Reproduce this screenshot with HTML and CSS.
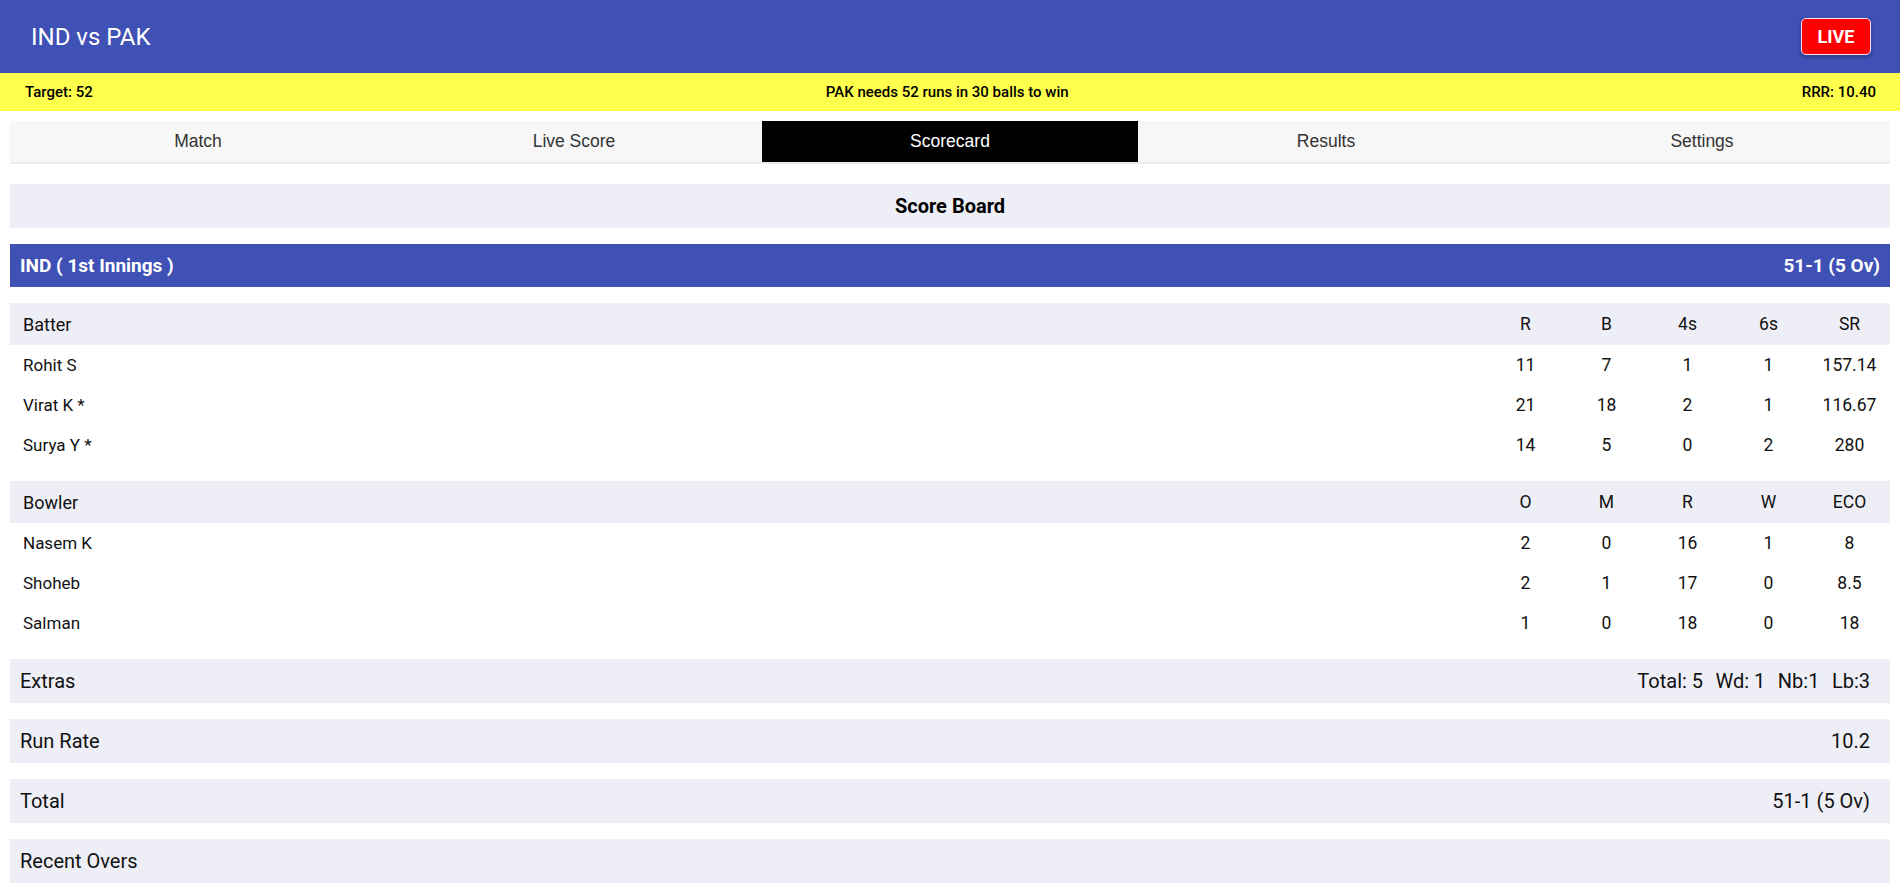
FILE: index.html
```html
<!DOCTYPE html>
<html lang="en">
<head>
<meta charset="utf-8">
<title>IND vs PAK</title>
<link rel="stylesheet" href="styles.css">
</head>
<body>
<header class="app-bar">
  <h1 class="app-title">IND vs PAK</h1>
  <button class="live-btn">LIVE</button>
</header>
<div class="status-bar">
  <span>Target: 52</span>
  <span>PAK needs 52 runs in 30 balls to win</span>
  <span>RRR: 10.40</span>
</div>
<main class="content">
  <nav class="tabs">
    <button class="tab">Match</button>
    <button class="tab">Live Score</button>
    <button class="tab active">Scorecard</button>
    <button class="tab">Results</button>
    <button class="tab">Settings</button>
  </nav>

  <div class="board-title">Score Board</div>

  <div class="innings-bar">
    <span>IND ( 1st Innings )</span>
    <span>51-1 (5 Ov)</span>
  </div>

  <div class="stat-table">
    <div class="stat-row head"><span class="name">Batter</span><span>R</span><span>B</span><span>4s</span><span>6s</span><span>SR</span></div>
    <div class="stat-row"><span class="name">Rohit S</span><span>11</span><span>7</span><span>1</span><span>1</span><span>157.14</span></div>
    <div class="stat-row"><span class="name">Virat K *</span><span>21</span><span>18</span><span>2</span><span>1</span><span>116.67</span></div>
    <div class="stat-row"><span class="name">Surya Y *</span><span>14</span><span>5</span><span>0</span><span>2</span><span>280</span></div>
  </div>

  <div class="stat-table">
    <div class="stat-row head"><span class="name">Bowler</span><span>O</span><span>M</span><span>R</span><span>W</span><span>ECO</span></div>
    <div class="stat-row"><span class="name">Nasem K</span><span>2</span><span>0</span><span>16</span><span>1</span><span>8</span></div>
    <div class="stat-row"><span class="name">Shoheb</span><span>2</span><span>1</span><span>17</span><span>0</span><span>8.5</span></div>
    <div class="stat-row"><span class="name">Salman</span><span>1</span><span>0</span><span>18</span><span>0</span><span>18</span></div>
  </div>

  <div class="summary-row">
    <span>Extras</span>
    <span class="extras"><span>Total: 5</span><span>Wd: 1</span><span>Nb:1</span><span>Lb:3</span></span>
  </div>
  <div class="summary-row">
    <span>Run Rate</span>
    <span>10.2</span>
  </div>
  <div class="summary-row">
    <span>Total</span>
    <span>51-1 (5 Ov)</span>
  </div>
  <div class="summary-row">
    <span>Recent Overs</span>
  </div>
</main>
</body>
</html>
```
FILE: styles.css
```css
* { box-sizing: border-box; }

body {
  margin: 0;
  font-family: Roboto, "Liberation Sans", Arial, sans-serif;
  color: #000;
  background: #fff;
}

.app-bar {
  height: 73px;
  background: #3f51b5;
  display: flex;
  align-items: center;
  justify-content: space-between;
  padding: 0 29px 0 31px;
}

.app-title {
  margin: 0;
  font-size: 24px;
  font-weight: 400;
  color: #fff;
}

.live-btn {
  width: 70px;
  height: 37px;
  background: #ff0000;
  color: #fff;
  border: 1px solid #f3e6ee;
  border-radius: 5px;
  font-family: Roboto, sans-serif;
  font-size: 18px;
  font-weight: 700;
  box-shadow: 0 2px 4px rgba(0, 0, 0, 0.3);
  padding: 0;
}

.status-bar {
  height: 38px;
  background: #ffff4d;
  display: flex;
  align-items: center;
  justify-content: space-between;
  padding: 0 24px 0 25px;
  font-size: 15px;
  font-weight: 500;
}

.content {
  padding: 10px 10px 0;
}

.tabs {
  display: grid;
  grid-template-columns: repeat(5, 1fr);
  background: #f7f7f7;
  border-bottom: 2px solid #ececec;
  margin-bottom: 20px;
}

.tab {
  height: 41px;
  border: 0;
  background: transparent;
  font-family: "Liberation Sans", Arial, sans-serif;
  font-size: 17.5px;
  color: #333;
  padding: 0;
}

.tab.active {
  background: #000;
  color: #fff;
}

.board-title {
  height: 44px;
  background: #eeeef7;
  display: flex;
  align-items: center;
  justify-content: center;
  font-size: 20px;
  font-weight: 700;
  margin-bottom: 16px;
}

.innings-bar {
  height: 43px;
  background: #3f51b5;
  color: #fff;
  display: flex;
  align-items: center;
  justify-content: space-between;
  padding: 0 10px;
  font-size: 19px;
  font-weight: 700;
  margin-bottom: 16px;
}

.stat-table {
  margin-bottom: 16px;
}

.stat-row {
  display: grid;
  grid-template-columns: 1fr repeat(5, 81px);
  align-items: center;
  height: 40px;
  font-size: 17.5px;
  color: #111;
}

.stat-row > span {
  text-align: center;
}

.stat-row > .name {
  text-align: left;
  padding-left: 13px;
  font-size: 17px;
}

.stat-row.head {
  height: 42px;
  background: #eeeef7;
}

.stat-row.head > .name {
  font-size: 18px;
}

.summary-row {
  height: 44px;
  background: #eeeef7;
  display: flex;
  align-items: center;
  justify-content: space-between;
  padding: 0 20px 0 10px;
  font-size: 20px;
  margin-bottom: 16px;
  color: #111;
}

.extras > span + span {
  margin-left: 12.5px;
}
```
